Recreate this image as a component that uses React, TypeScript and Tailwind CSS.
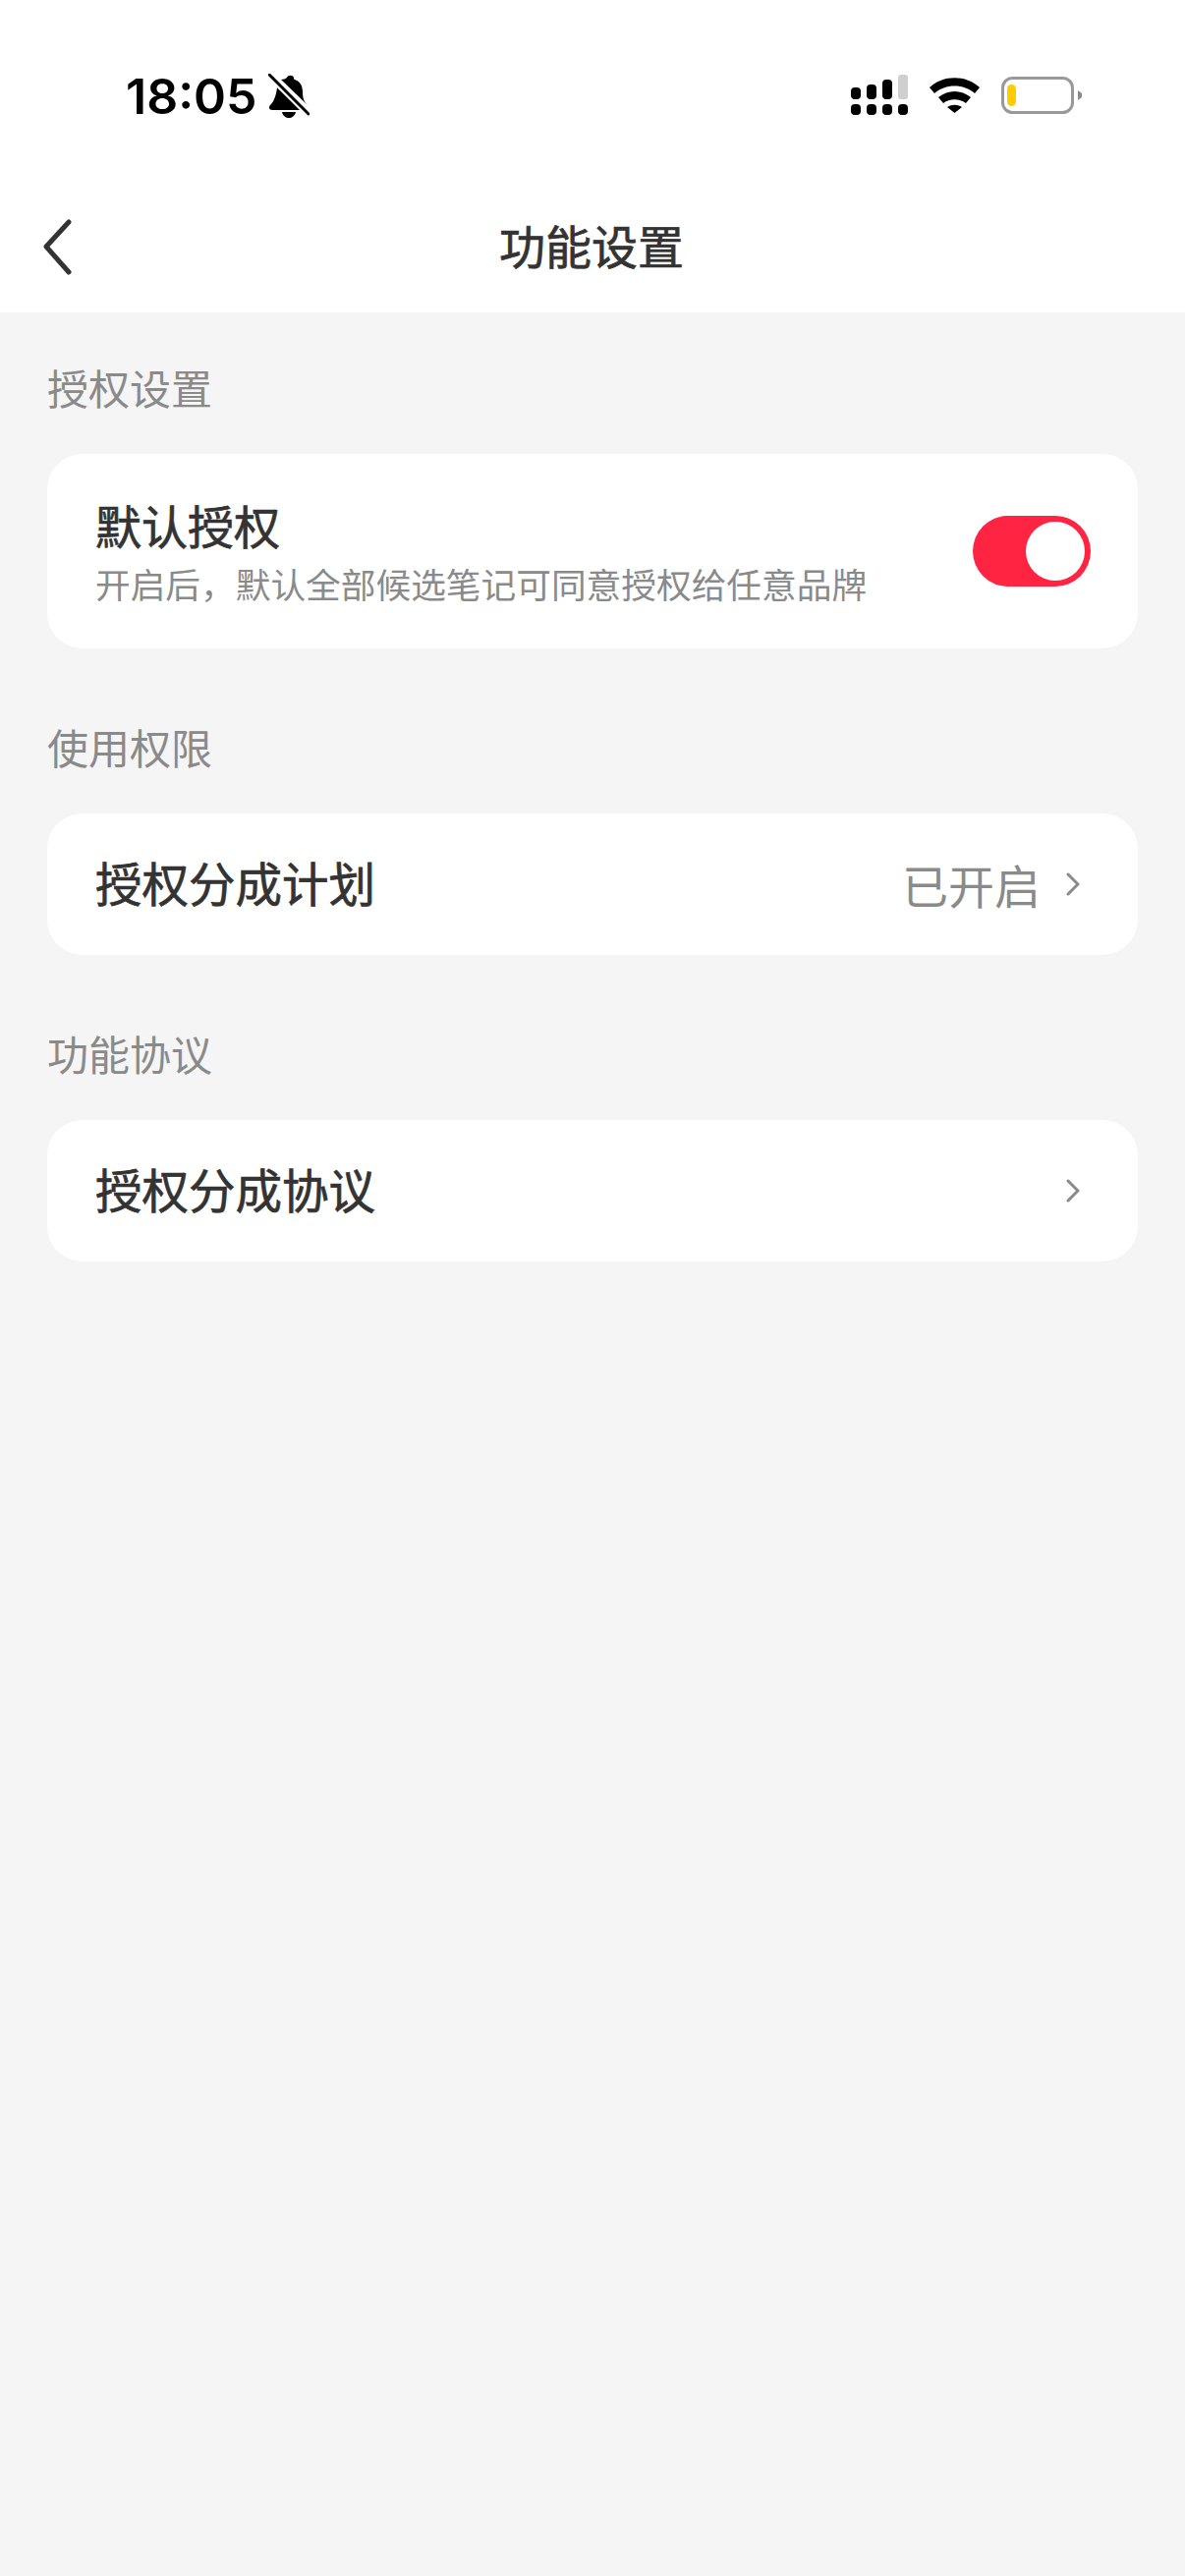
import { ReactNode } from "react";

const cjk = "font-['Noto_Sans_CJK_SC','Noto_Sans',sans-serif]";

function MutedBell() {
  return (
    <svg width="42" height="46" viewBox="0 0 42 46" className="ml-[11px]">
      <path
        d="M19 4c1-3 6-3 7 0 0 1 0 2 1 2 6 2 8 7 8 13 0 5 1 9 5 13L13 6c2 0 5-1 6-2ZM9 14l24 23H4c-3 0-4-3-2-5 4-4 6-10 7-18ZM14 39h14c-1 4-4 6-7 6s-6-2-7-6Z"
        fill="#000"
      />
      <path d="M3 3l37 37" stroke="#fff" strokeWidth="7" />
      <path d="M1 1l40 40" stroke="#000" strokeWidth="3" strokeLinecap="round" />
    </svg>
  );
}

function StatusIcons() {
  return (
    <div className="flex items-center">
      <svg width="60" height="42" viewBox="0 0 60 42">
        <rect x="0" y="14" width="10" height="12" rx="4" fill="#000" />
        <rect x="16" y="11" width="10" height="15" rx="4" fill="#000" />
        <rect x="32" y="6" width="10" height="20" rx="4" fill="#000" />
        <rect x="48" y="1" width="10" height="25" rx="3" fill="#cfcfcf" />
        <rect x="0" y="31" width="10" height="11" rx="4" fill="#000" />
        <rect x="16" y="31" width="10" height="11" rx="4" fill="#000" />
        <rect x="32" y="31" width="10" height="11" rx="4" fill="#000" />
        <rect x="48" y="31" width="10" height="11" rx="4" fill="#000" />
      </svg>
      <svg width="52" height="38" viewBox="0 0 52 38" className="ml-[20px]">
        <path d="M0 12C14-1 37-1 51 12l-5 6C35 8 16 8 5 18Z" fill="#000" />
        <path d="M9 22c10-8 23-8 33 0l-5 6c-7-5-16-5-23 0Z" fill="#000" />
        <path d="M18 32c5-3 10-3 15 0l-7.500 6Z" fill="#000" />
      </svg>
      <svg width="84" height="38" viewBox="0 0 84 38" className="ml-[21px] mt-[2px]">
        <rect x="1.500" y="1.500" width="71" height="35" rx="10" fill="#fff" stroke="#999" strokeWidth="3" />
        <rect x="6" y="8" width="9" height="22" rx="4.500" fill="#ffcc00" />
        <path d="M78 14l4 3v4l-4 3Z" fill="#8a8a8a" />
      </svg>
    </div>
  );
}

function Chevron() {
  return (
    <svg width="14" height="24" viewBox="0 0 14 24">
      <path d="M2 2l10 10L2 22" fill="none" stroke="#8a8a8a" strokeWidth="3" strokeLinecap="round" strokeLinejoin="round" />
    </svg>
  );
}

function Section({ label, children }: { label: string; children: ReactNode }) {
  return (
    <section>
      <h2 className="h-[130px] pb-[6px] flex items-center text-[42px] leading-none font-normal text-[#8a8a8a]">{label}</h2>
      {children}
    </section>
  );
}

function LinkRow({ title, value }: { title: string; value?: string }) {
  return (
    <div className="h-[144px] rounded-[36px] bg-white pl-[49px] pr-[59px] flex items-center justify-between">
      <span className="pb-[4px] text-[47.500px] leading-none font-normal [-webkit-text-stroke:0.7px_#333333] text-[#333333]">{title}</span>
      <div className="flex items-center gap-[26px]">
        {value && <span className="pb-[2px] text-[47px] leading-none text-[#8a8a8a]">{value}</span>}
        <Chevron />
      </div>
    </div>
  );
}

export default function App() {
  return (
    <div className={`w-[1206px] h-[2622px] bg-[#f5f5f5] overflow-hidden ${cjk}`}>
      <header className="h-[318px] bg-white">
        <div className="h-[190px] pl-[128px] pr-[103px] pt-[75px] flex items-start justify-between">
          <div className="flex items-center h-[46px]">
            <span className="font-['Inter',sans-serif] text-[50px] leading-none font-semibold text-black">18:05</span>
            <MutedBell />
          </div>
          <StatusIcons />
        </div>
        <div className="relative h-[128px] flex items-start justify-center">
          <svg width="30" height="58" viewBox="0 0 30 58" className="absolute left-[44px] top-[33px]">
            <path d="M26 3L3 28l23 26" fill="none" stroke="#333333" strokeWidth="5" strokeLinecap="round" strokeLinejoin="round" />
          </svg>
          <h1 className="pr-[2px] text-[47px] leading-[118px] font-normal [-webkit-text-stroke:0.7px_#333333] text-[#333333]">功能设置</h1>
        </div>
      </header>

      <main className="px-[48px] pt-[14px] flex flex-col gap-[38px]">
        <Section label="授权设置">
          <div className="h-[198px] rounded-[36px] bg-white pl-[49px] pr-[48px] flex items-center justify-between">
            <div className="flex flex-col pb-[2px]">
              <span className="text-[47px] leading-[60px] font-normal [-webkit-text-stroke:0.7px_#333333] text-[#333333]">默认授权</span>
              <span className="mt-[8px] text-[35.700px] leading-[44px] text-[#8a8a8a]">开启后，默认全部候选笔记可同意授权给任意品牌</span>
            </div>
            <div className="w-[120px] h-[72px] rounded-full bg-[#ff2442] p-[6px] flex justify-end">
              <div className="w-[60px] h-[60px] rounded-full bg-white" />
            </div>
          </div>
        </Section>
        <Section label="使用权限">
          <LinkRow title="授权分成计划" value="已开启" />
        </Section>
        <Section label="功能协议">
          <LinkRow title="授权分成协议" />
        </Section>
      </main>
    </div>
  );
}
